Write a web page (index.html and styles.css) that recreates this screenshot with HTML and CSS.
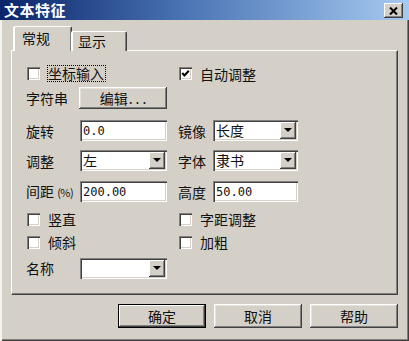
FILE: index.html
```html
<!DOCTYPE html>
<html lang="zh-CN">
<head>
<meta charset="utf-8">
<title>文本特征</title>
<link rel="stylesheet" href="styles.css">
</head>
<body>
<div class="window">
  <div class="titlebar">
    <span class="title">文本特征</span>
    <span class="close"><svg width="9" height="8" viewBox="0 0 9 8"><path d="M1 0.5 L8 7.5 M8 0.5 L1 7.5" stroke="#000" stroke-width="2" fill="none"/></svg></span>
  </div>
  <div class="content">
    <div class="tabs">
      <div class="tab active">常规</div>
      <div class="tab">显示</div>
    </div>
    <div class="panel">
      <div class="row r1">
        <div class="check left"><span class="box"></span><span class="focus">坐标输入</span></div>
        <div class="check right"><span class="box"><svg width="9" height="9" viewBox="0 0 9 9"><path d="M1.2 4 L3.5 6.5 L7.8 1.8" stroke="#000" stroke-width="2" fill="none"/></svg></span><span class="ctext">自动调整</span></div>
      </div>
      <div class="row r2">
        <span class="lbl c1">字符串</span>
        <div class="btn edit c2">编辑<span class="dots">...</span></div>
      </div>
      <div class="row r3">
        <span class="lbl c1">旋转</span>
        <div class="field c2">0.0</div>
        <span class="lbl c4">镜像</span>
        <div class="field select c5"><span class="stext">长度</span><span class="arrow"></span></div>
      </div>
      <div class="row r4">
        <span class="lbl c1">调整</span>
        <div class="field select c2"><span class="stext">左</span><span class="arrow"></span></div>
        <span class="lbl c4">字体</span>
        <div class="field select c5"><span class="stext">隶书</span><span class="arrow"></span></div>
      </div>
      <div class="row r5">
        <span class="lbl c1">间距 <span class="pct">(%)</span></span>
        <div class="field c2">200.00</div>
        <span class="lbl c4">高度</span>
        <div class="field c5">50.00</div>
      </div>
      <div class="row r6">
        <div class="check left"><span class="box"></span><span class="ctext">竖直</span></div>
        <div class="check right"><span class="box"></span><span class="ctext">字距调整</span></div>
      </div>
      <div class="row r7">
        <div class="check left"><span class="box"></span><span class="ctext">倾斜</span></div>
        <div class="check right"><span class="box"></span><span class="ctext">加粗</span></div>
      </div>
      <div class="row r8">
        <span class="lbl c1">名称</span>
        <div class="field select c2"><span class="stext"></span><span class="arrow"></span></div>
      </div>
    </div>
    <div class="buttons">
      <div class="btn push default">确定</div>
      <div class="btn push">取消</div>
      <div class="btn push">帮助</div>
    </div>
  </div>
</div>
</body>
</html>
```

FILE: styles.css
```css
html, body {
  margin: 0;
  padding: 0;
  background: #d4d0c8;
}

.window {
  width: 409px;
  height: 341px;
  background: #d4d0c8;
  box-shadow: inset 2px 0 #f4f3ef, inset -1px -1px #404040, inset -2px -2px #808080;
  display: flex;
  flex-direction: column;
  overflow: hidden;
  font-family: "Noto Sans CJK SC", "Noto Sans", sans-serif;
  font-size: 14px;
  color: #111;
}

.titlebar {
  height: 20px;
  flex: none;
  background: linear-gradient(to right, #0a246a 0%, #4a74b4 45%, #a6caf0 100%);
  display: flex;
  align-items: center;
  justify-content: space-between;
  padding: 0 6px 0 4px;
}

.title {
  color: #fff;
  font-weight: bold;
  font-size: 15px;
  line-height: 16px;
  letter-spacing: 0.5px;
}

.close {
  width: 19px;
  height: 15px;
  margin-top: 1px;
  background: #d4d0c8;
  box-shadow: inset -1px -1px #404040, inset 1px 1px #fff, inset -2px -2px #808080;
  display: flex;
  align-items: center;
  justify-content: center;
}

.content {
  padding: 7px 11px 0 11px;
  display: flex;
  flex-direction: column;
}

.tabs {
  display: flex;
  align-items: flex-end;
  height: 24px;
  padding-left: 3px;
  position: relative;
  z-index: 1;
  margin-bottom: -1px;
}

.tab {
  box-sizing: border-box;
  height: 20px;
  width: 55px;
  padding-left: 5px;
  line-height: 19px;
  background: #d4d0c8;
  border-top: 1px solid #fff;
  border-left: 1px solid #fff;
  box-shadow: inset -1px 0 #808080, -1px 0 0 #fff;
  border-right: 1px solid #404040;
  border-radius: 2px 2px 0 0;
}

.tab.active {
  height: 25px;
  width: 58px;
  padding-left: 7px;
  line-height: 23px;
  border-bottom: none;
}

.panel {
  box-sizing: border-box;
  width: 387px;
  height: 245px;
  border-top: 1px solid #fff;
  border-left: 1px solid #fff;
  border-right: 1px solid #404040;
  border-bottom: 1px solid #404040;
  box-shadow: inset -1px -1px #808080;
  padding: 14px 0 0 14px;
  display: flex;
  flex-direction: column;
}

.row {
  display: grid;
  grid-template-columns: 54px 87px 11px 35px 85px;
  align-items: center;
}

.r1 { height: 17px; }
.r2 { height: 22px; margin-top: 5px; }
.r3 { height: 21px; margin-top: 11px; }
.r4 { height: 21px; margin-top: 9px; }
.r5 { height: 21px; margin-top: 10px; }
.r6 { height: 16px; margin-top: 9px; }
.r7 { height: 16px; margin-top: 7px; }
.r8 { height: 22px; margin-top: 7px; }

.c1 { grid-column: 1; }
.c2 { grid-column: 2; }
.c4 { grid-column: 4; }
.c5 { grid-column: 5; }

.lbl {
  line-height: 18px;
  white-space: nowrap;
}

.pct {
  font-size: 11px;
  letter-spacing: -0.5px;
}

.check {
  display: flex;
  align-items: center;
  padding-left: 1px;
}

.check.left { grid-column: 1 / 3; }
.check.right { grid-column: 4 / 6; }

.box {
  box-sizing: border-box;
  width: 13px;
  height: 13px;
  flex: none;
  background: #fff;
  box-shadow: inset 1px 1px #808080, inset 2px 2px #404040, inset -1px -1px #fff, inset -2px -2px #d4d0c8;
  display: flex;
  align-items: center;
  justify-content: center;
  margin-right: 8px;
}

.ctext {
  line-height: 16px;
}

.focus {
  border: 1px dotted #000;
  line-height: 15px;
  padding: 0 1px 0 0;
  margin-left: -1px;
}

.field {
  box-sizing: border-box;
  height: 21px;
  background: #fff;
  box-shadow: inset 1px 1px #808080, inset 2px 2px #404040, inset -1px -1px #fff, inset -2px -2px #d4d0c8;
  padding: 2px 2px 0 3px;
  font-family: "DejaVu Sans Mono", "Liberation Mono", monospace;
  font-size: 12px;
  line-height: 18px;
}

.select {
  display: flex;
  align-items: stretch;
  padding: 2px 2px 2px 3px;
  font-family: "Noto Sans CJK SC", "Noto Sans", sans-serif;
  font-size: 14px;
  line-height: 17px;
}

.stext {
  flex: 1;
}

.arrow {
  width: 16px;
  flex: none;
  background: #d4d0c8;
  box-shadow: inset -1px -1px #404040, inset 1px 1px #fff, inset -2px -2px #808080;
  position: relative;
}

.arrow::after {
  content: "";
  position: absolute;
  left: 4px;
  top: 6px;
  border-left: 4px solid transparent;
  border-right: 4px solid transparent;
  border-top: 4px solid #000;
}

.btn {
  box-sizing: border-box;
  background: #d4d0c8;
  box-shadow: inset -1px -1px #404040, inset 1px 1px #fff, inset -2px -2px #808080, inset 2px 2px #e4e1db;
  display: flex;
  align-items: center;
  justify-content: center;
}

.edit {
  height: 22px;
  width: 88px;
  margin-left: -1px;
  padding-bottom: 1px;
}

.dots {
  letter-spacing: 3px;
  margin-left: 1px;
  margin-right: -3px;
}

.buttons {
  display: flex;
  justify-content: flex-end;
  gap: 8px;
  margin-top: 9px;
}

.push {
  width: 88px;
  height: 24px;
}

.default {
  border: 1px solid #000;
  box-shadow: inset -1px -1px #404040, inset 1px 1px #fff, inset -2px -2px #808080;
}
```
